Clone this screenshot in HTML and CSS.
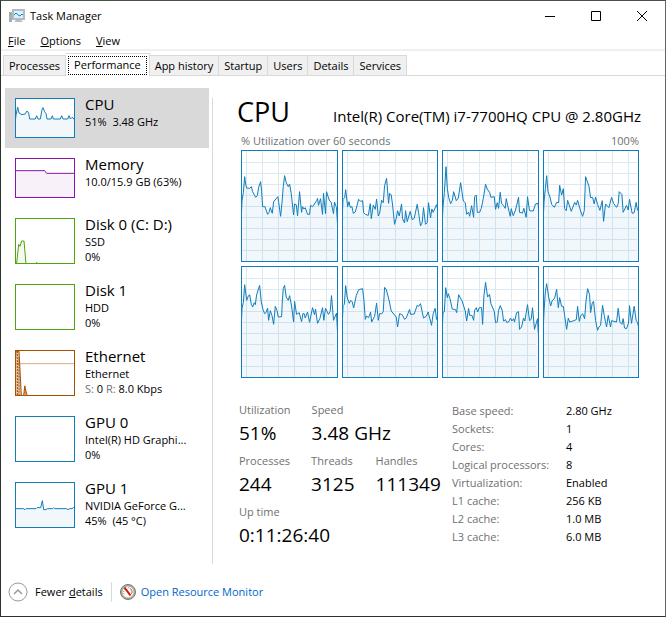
FILE: index.html
```html
<!DOCTYPE html>
<html lang="en">
<head>
    <meta charset="UTF-8">
    <title>Task Manager</title>
    <link rel="stylesheet" href="styles.css">
</head>
<body>
    <!-- Grid shared by the core graphs -->
    <svg class="defs" aria-hidden="true">
        <symbol id="grid" viewBox="0 0 284 330" preserveAspectRatio="none">
            <path class="grid-lines" d="M14 0V330M62 0V330M110 0V330M158 0V330M206 0V330M254 0V330M0 34H278M0 67H278M0 100H278M0 133H278M0 166H278M0 199H278M0 232H278M0 265H278M0 298H278"/>
        </symbol>
    </svg>

    <div class="window">
        <!-- Title bar -->
        <header class="title-bar">
            <svg class="app-icon" viewBox="0 0 16 16" aria-hidden="true">
                <rect x="0" y="4" width="3" height="10" fill="#a9adb0"/>
                <rect x="1" y="5" width="1" height="2" fill="#4fd14f"/>
                <path d="M7 12h5l2 2H5z" fill="#b9bdc0"/>
                <rect x="3" y="1" width="13" height="11" fill="#b4babf"/>
                <rect x="5" y="3" width="9" height="7" fill="#d9f1fc"/>
                <path d="M5 7l2-2 2 2 2 1 2-2 1 1" fill="none" stroke="#1a86c7"/>
            </svg>
            <span class="title">Task Manager</span>
            <div class="window-buttons">
                <button aria-label="Minimize"><svg viewBox="0 0 12 12"><path d="M1 6.500h10"/></svg></button>
                <button aria-label="Maximize"><svg viewBox="0 0 12 12"><path d="M1.500 1.500h9v9h-9z"/></svg></button>
                <button aria-label="Close"><svg viewBox="0 0 12 12"><path d="M1 1l10 10M11 1L1 11"/></svg></button>
            </div>
        </header>

        <!-- Menu -->
        <nav class="menu">
            <button><u>F</u>ile</button>
            <button><u>O</u>ptions</button>
            <button><u>V</u>iew</button>
        </nav>

        <!-- Tabs -->
        <nav class="tabs">
            <button class="tab">Processes</button>
            <button class="tab active"><span>Performance</span></button>
            <button class="tab">App history</button>
            <button class="tab">Startup</button>
            <button class="tab">Users</button>
            <button class="tab">Details</button>
            <button class="tab">Services</button>
        </nav>

        <main class="content">
            <!-- Resource list -->
            <div class="sidebar">
                <button class="item selected">
                    <svg class="thumb blue" viewBox="0 0 174 114" preserveAspectRatio="none"><path d="M-9 130L0 48 5 24 9 42 18 47 27 45 33 36 38 42 41 60 58 60 62 50 66 60 73 60 78 32 81 26 86 38 90 44 93 60 105 60 109 50 112 60 133 60 137 50 141 60 155 60 159 50 163 60 168 55 175 60 185 130z"/></svg>
                    <span class="info"><span class="name">CPU</span><span>51%&nbsp; 3.48 GHz</span></span>
                </button>
                <button class="item">
                    <svg class="thumb purple" viewBox="0 0 174 114" preserveAspectRatio="none"><path d="M-9 130V35H86L92 43H185V130z"/></svg>
                    <span class="info"><span class="name">Memory</span><span>10.0/15.9 GB (63%)</span></span>
                </button>
                <button class="item">
                    <svg class="thumb green tall" viewBox="0 0 174 132" preserveAspectRatio="none"><path d="M-9 150L2 132 8 76 12 82 17 66 24 66 30 135 60 135 62 130 64 135 185 150z"/></svg>
                    <span class="info"><span class="name">Disk 0 (C: D:)</span><span>SSD</span><span>0%</span></span>
                </button>
                <button class="item">
                    <svg class="thumb green tall" viewBox="0 0 174 132" preserveAspectRatio="none"></svg>
                    <span class="info"><span class="name">Disk 1</span><span>HDD</span><span>0%</span></span>
                </button>
                <button class="item">
                    <svg class="thumb orange tall" viewBox="0 0 174 132" preserveAspectRatio="none">
                        <path class="level" d="M0 38H174"/>
                        <path d="M-9 150L0 0H9L16 135 23 135 26 106 34 135 185 150z"/>
                        <path class="dots" d="M4 0V132M9 20V132M27 104V132"/>
                    </svg>
                    <span class="info"><span class="name">Ethernet</span><span>Ethernet</span><span><span class="muted">S:</span> 0 <span class="muted">R:</span> 8.0 Kbps</span></span>
                </button>
                <button class="item">
                    <svg class="thumb blue tall" viewBox="0 0 174 132" preserveAspectRatio="none"></svg>
                    <span class="info"><span class="name">GPU 0</span><span>Intel(R) HD Graphi...</span><span>0%</span></span>
                </button>
                <button class="item">
                    <svg class="thumb blue tall" viewBox="0 0 174 132" preserveAspectRatio="none"><path d="M-9 150V77H22L27 80 30 77H60L63 74H74L79 53 83 80 90 80 94 77H110L113 74 116 77H151L156 80 160 77 168 77 172 74H185V150z"/></svg>
                    <span class="info"><span class="name">GPU 1</span><span>NVIDIA GeForce G...</span><span>45%&nbsp; (45 °C)</span></span>
                </button>
            </div>

            <!-- CPU details -->
            <section class="details">
                <div class="heading">
                    <h1>CPU</h1>
                    <h2>Intel(R) Core(TM) i7-7700HQ CPU @ 2.80GHz</h2>
                </div>
                <div class="caption"><span>% Utilization over 60 seconds</span><span>100%</span></div>

                <div class="graphs">
                    <svg viewBox="0 0 284 330" preserveAspectRatio="none"><use href="#grid"/><path d="M-9 345L0 149 4 125 8 77 11 99 14 111 23 112 28 107 32 122 41 139 46 134 50 109 56 92 59 122 62 167 69 167 77 190 81 185 85 170 91 187 95 152 108 137 110 152 116 196 120 157 124 107 128 74 133 95 139 107 143 99 148 127 155 192 158 159 163 161 167 194 173 122 179 184 182 167 186 174 190 170 197 190 203 190 206 163 212 167 225 148 227 142 230 163 236 143 242 190 245 127 251 188 254 122 262 147 268 154 275 188 278 153 284 170 295 345z"/></svg>
                    <svg viewBox="0 0 284 330" preserveAspectRatio="none"><use href="#grid"/><path d="M-9 345L0 145 5 140 8 116 14 167 18 152 22 169 27 167 31 187 37 183 47 145 53 151 59 149 62 185 67 190 76 193 82 158 85 203 91 162 97 175 101 144 106 195 110 187 116 148 121 155 125 104 131 82 137 157 140 127 145 132 149 162 155 220 160 202 164 179 169 195 176 159 179 203 185 216 188 179 193 212 202 181 208 206 214 202 223 160 227 184 233 225 238 214 242 170 248 220 253 215 257 155 263 201 267 174 271 184 281 161 286 181 295 345z"/></svg>
                    <svg viewBox="0 0 284 330" preserveAspectRatio="none"><use href="#grid"/><path d="M-9 345L0 167 4 125 9 47 13 112 17 139 23 158 28 148 32 122 40 149 46 141 53 95 61 150 67 155 71 190 77 183 80 196 86 164 92 199 95 137 100 132 103 184 110 184 115 172 121 143 128 100 133 114 140 124 144 139 154 137 158 175 163 155 167 172 172 124 176 157 182 164 187 172 190 143 194 162 202 196 205 173 211 194 218 177 227 139 230 184 239 186 243 172 250 199 254 137 260 179 271 180 278 159 286 157 295 345z"/></svg>
                    <svg viewBox="0 0 284 330" preserveAspectRatio="none"><use href="#grid"/><path d="M-9 345L0 154 4 112 8 74 12 122 18 138 23 160 31 169 38 154 44 155 47 103 53 132 58 113 62 173 67 179 71 148 82 181 92 154 97 162 101 148 110 180 116 196 121 179 125 77 135 105 140 140 146 139 151 159 155 138 161 160 168 178 175 149 179 211 185 159 195 170 203 139 209 157 218 169 223 158 226 122 234 130 238 184 248 163 253 177 257 145 265 187 271 185 277 154 281 178 286 173 295 345z"/></svg>
                    <svg viewBox="0 0 284 330" preserveAspectRatio="none"><use href="#grid"/><path d="M-9 345L0 123 4 107 8 53 14 100 19 87 23 83 28 112 32 120 37 107 40 113 44 83 53 55 58 105 63 127 68 140 72 137 77 123 80 160 85 131 90 145 95 172 100 118 105 130 109 150 119 149 121 105 124 65 128 55 133 90 139 100 143 86 149 117 155 165 158 103 164 142 172 137 179 164 183 140 187 140 190 153 197 135 203 166 212 122 218 143 221 126 227 169 234 155 242 122 246 160 251 124 260 142 265 133 269 86 275 160 284 138 295 345z"/></svg>
                    <svg viewBox="0 0 284 330" preserveAspectRatio="none"><use href="#grid"/><path d="M-9 345L0 116 4 112 8 56 13 93 19 109 23 100 28 105 32 123 40 85 47 68 59 65 63 100 67 157 71 147 77 152 83 135 86 165 95 148 101 108 106 160 110 140 117 140 121 133 125 61 130 67 139 102 145 132 160 150 164 180 170 140 178 143 185 157 190 153 200 127 203 142 214 141 223 115 227 118 233 110 242 153 250 148 256 135 266 175 271 140 277 124 281 157 286 157 295 345z"/></svg>
                    <svg viewBox="0 0 284 330" preserveAspectRatio="none"><use href="#grid"/><path d="M-9 345L0 136 4 134 8 62 13 92 16 80 21 95 28 126 38 128 41 137 47 83 57 101 67 132 71 162 77 124 80 145 87 145 92 160 95 130 100 122 104 135 109 122 116 122 119 172 123 85 128 46 134 90 140 82 144 110 154 133 158 167 163 165 167 130 172 116 178 130 182 162 188 158 191 166 197 165 203 153 207 162 212 155 215 165 221 137 227 134 230 187 236 180 242 153 246 162 254 113 260 161 265 157 269 122 275 187 284 155 295 345z"/></svg>
                    <svg viewBox="0 0 284 330" preserveAspectRatio="none"><use href="#grid"/><path d="M-9 345L0 134 4 75 8 50 14 90 20 117 24 102 32 93 38 67 43 122 47 92 53 118 58 118 62 145 68 187 73 153 77 165 87 162 97 158 101 118 106 163 110 147 116 140 122 155 126 105 131 65 137 83 140 137 145 108 149 103 155 160 161 190 165 180 170 175 176 115 181 145 188 180 193 145 200 180 203 161 218 165 223 124 228 165 234 172 238 155 242 183 248 185 254 168 257 116 263 169 271 118 277 160 281 167 286 187 295 345z"/></svg>
                </div>

                <div class="stats">
                    <div class="counters">
                        <dl class="row">
                            <div class="stat"><dt>Utilization</dt><dd>51%</dd></div>
                            <div class="stat"><dt>Speed</dt><dd>3.48 GHz</dd></div>
                        </dl>
                        <dl class="row">
                            <div class="stat"><dt>Processes</dt><dd>244</dd></div>
                            <div class="stat"><dt>Threads</dt><dd>3125</dd></div>
                            <div class="stat"><dt>Handles</dt><dd>111349</dd></div>
                        </dl>
                        <dl class="row">
                            <div class="stat"><dt>Up time</dt><dd>0:11:26:40</dd></div>
                        </dl>
                    </div>
                    <table class="specs">
                        <tr><th>Base speed:</th><td>2.80 GHz</td></tr>
                        <tr><th>Sockets:</th><td>1</td></tr>
                        <tr><th>Cores:</th><td>4</td></tr>
                        <tr><th>Logical processors:</th><td>8</td></tr>
                        <tr><th>Virtualization:</th><td>Enabled</td></tr>
                        <tr><th>L1 cache:</th><td>256 KB</td></tr>
                        <tr><th>L2 cache:</th><td>1.0 MB</td></tr>
                        <tr><th>L3 cache:</th><td>6.0 MB</td></tr>
                    </table>
                </div>
            </section>
        </main>

        <!-- Footer -->
        <footer class="footer">
            <button class="fewer">
                <svg viewBox="0 0 20 20" aria-hidden="true"><circle cx="10" cy="10" r="9" fill="#fff" stroke="#999"/><path d="M6 12l4-4 4 4" fill="none" stroke="#999" stroke-width="1.500"/></svg>
                <span>Fewer <u>d</u>etails</span>
            </button>
            <a class="monitor" href="#">
                <svg viewBox="0 0 16 16" aria-hidden="true">
                    <circle cx="8" cy="8" r="7.500" fill="#b5b5ac" stroke="#77776f"/>
                    <circle cx="8" cy="8" r="6" fill="#fafaf7" stroke="#8d8d85" stroke-width=".6"/>
                    <path d="M4 10a4.500 4.500 0 0 1 1-5M8 3.500a4.500 4.500 0 0 1 4 6" fill="none" stroke="#8d8d85" stroke-dasharray="1 1"/>
                    <path d="M10.500 5a4.500 4.500 0 0 1 1 5" fill="none" stroke="#e87b3a"/>
                    <path d="M4.500 3.500L10.500 11.500" stroke="#d40f0f" stroke-width="2"/>
                </svg>
                <span>Open Resource Monitor</span>
            </a>
        </footer>
    </div>
</body>
</html>
```
FILE: styles.css
```css
* {
    box-sizing: border-box;
}
body {
    margin: 0;
    background: #fff;
    color: #000;
    font-family: "Open Sans", "Noto Sans", sans-serif;
    font-size: 11px;
    line-height: 16px;
}
button {
    margin: 0;
    padding: 0;
    border: none;
    background: none;
    color: inherit;
    font: inherit;
    text-align: left;
}
h1, h2, dl, dd {
    margin: 0;
    font-weight: normal;
}
.defs {
    position: absolute;
    width: 0;
    height: 0;
}
.window {
    display: flex;
    flex-direction: column;
    min-height: 100vh;
    border: 1px solid #2b332e;
    border-top-color: #465445;
    border-right-color: #666;
}

/* Title bar and menu */
.title-bar {
    display: flex;
    align-items: center;
    height: 30px;
    padding-left: 8px;
}
.app-icon {
    width: 16px;
    height: 16px;
    margin-right: 5px;
}
.window-buttons {
    display: flex;
    margin-left: auto;
}
.window-buttons button {
    display: flex;
    align-items: center;
    justify-content: center;
    width: 46px;
    height: 30px;
}
.window-buttons svg {
    width: 12px;
    height: 12px;
    fill: none;
    stroke: #000;
}
.menu {
    display: flex;
    gap: 15px;
    height: 20px;
    padding: 2px 7px;
    border-bottom: 2px solid #f0f0f0;
}
.menu button {
    line-height: 16px;
}

/* Tabs */
.tabs {
    display: flex;
    align-items: flex-end;
    height: 25px;
    padding-left: 2px;
    border-bottom: 1px solid #d9d9d9;
}
.tab {
    height: 20px;
    padding: 0 5px;
    border: 1px solid #d9d9d9;
    border-bottom: none;
    border-left: none;
    background: #f0f0f0;
}
.tab:first-child {
    border-left: 1px solid #d9d9d9;
}
.tab.active {
    height: 23px;
    margin-bottom: -1px;
    padding: 2px 2px 1px;
    background: #fff;
}
.tab.active span {
    display: block;
    height: 19px;
    padding: 0 5px;
    border: 1px dotted #000;
}

/* Resource list */
.content {
    display: flex;
    flex: 1;
    padding: 12px 24px 0 4px;
}
.sidebar {
    flex: none;
    width: 204px;
}
.item {
    display: flex;
    gap: 10px;
    width: 100%;
    padding: 10px;
}
.item.selected {
    background: #d9d9d9;
}
.thumb {
    flex: none;
    width: 60px;
    height: 40px;
    border: 1px solid;
    background: #fff;
}
.thumb.tall {
    height: 46px;
}
.thumb path {
    stroke: currentColor;
    fill: currentColor;
    fill-opacity: .06;
    vector-effect: non-scaling-stroke;
}
.blue { color: #117dbb; }
.purple { color: #8b12ae; }
.green { color: #4da60c; }
.orange { color: #a74f01; }
.thumb .level {
    stroke: #d9ab7e;
}
.orange path {
    fill-opacity: .3;
}
.thumb .dots {
    stroke-dasharray: 2 1;
}
.info {
    display: flex;
    flex-direction: column;
    height: 40px;
    margin-top: -4px;
    line-height: 15px;
    white-space: nowrap;
}
.info .name {
    font-size: 15px;
    line-height: 20px;
}
.muted {
    color: #707070;
}

/* CPU details */
.details {
    flex: 1;
    margin: 10px 0 0 3px;
    padding-left: 24px;
    border-left: 1px solid #d9d9d9;
}
.heading {
    display: flex;
    align-items: baseline;
    justify-content: space-between;
    height: 35px;
    white-space: nowrap;
}
h1 {
    font-size: 27px;
    line-height: 28px;
}
h2 {
    font-size: 15px;
    line-height: 20px;
}
.caption {
    display: flex;
    justify-content: space-between;
    height: 17px;
    padding: 0 2px 0 4px;
    color: #707070;
}
.graphs {
    display: grid;
    grid-template-columns: repeat(4, 1fr);
    gap: 4px;
    padding: 0 2px 0 4px;
}
.graphs svg {
    width: 100%;
    height: 112px;
    border: 1px solid #117dbb;
}
.graphs path {
    fill: #117dbb;
    fill-opacity: .06;
    stroke: #117dbb;
    vector-effect: non-scaling-stroke;
}
.grid-lines {
    fill: none;
    stroke: #d9eaf4;
    stroke-width: 1px;
    shape-rendering: crispEdges;
    vector-effect: non-scaling-stroke;
}

/* Counters */
.stats {
    display: flex;
    padding: 24px 0 0 2px;
}
.counters {
    width: 213px;
    white-space: nowrap;
}
.row {
    display: flex;
    gap: 21px;
    height: 51px;
}
dt {
    color: #707070;
}
dd {
    font-size: 19px;
    line-height: 30px;
}
.specs {
    border-collapse: collapse;
    align-self: flex-start;
    line-height: 18px;
    white-space: nowrap;
}
.specs th {
    width: 114px;
    padding: 0;
    color: #707070;
    font-weight: normal;
    text-align: left;
}
.specs td {
    padding: 0;
}

/* Footer */
.footer {
    display: flex;
    align-items: center;
    height: 52px;
    padding: 3px 0 0 7px;
}
.fewer, .monitor {
    display: flex;
    align-items: center;
}
.fewer {
    gap: 7px;
    padding-right: 8px;
    border-right: 1px solid #d9d9d9;
}
.fewer svg {
    width: 20px;
    height: 20px;
}
.monitor {
    gap: 5px;
    padding-left: 8px;
    color: #0066cc;
    text-decoration: none;
}
.monitor svg {
    width: 16px;
    height: 16px;
}
```
